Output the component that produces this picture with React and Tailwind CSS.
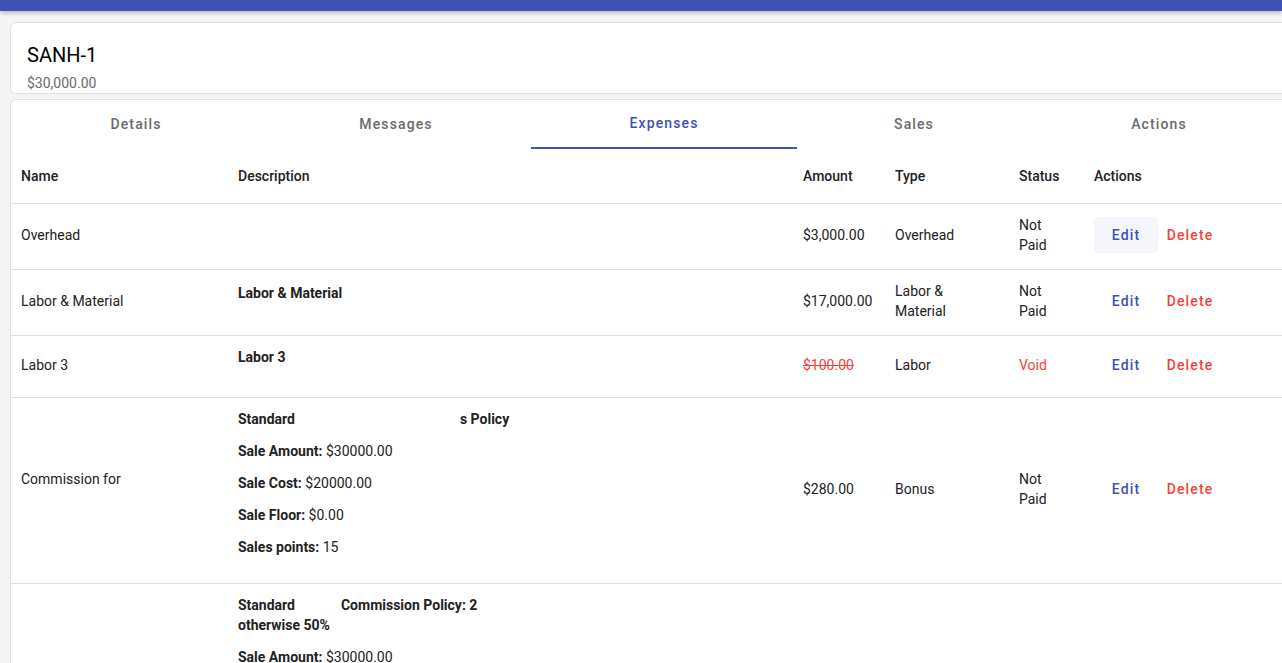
import React from 'react';

const tabs = [
    { label: 'Details', w: 'w-[250px]' },
    { label: 'Messages', w: 'w-[270px]' },
    { label: 'Expenses', w: 'w-[266px]', active: true },
    { label: 'Sales', w: 'w-[234px]' },
    { label: 'Actions', w: 'w-[256px]' },
];

function Line({ label, value }) {
    return (
        <p className="mb-3 leading-5">
            <span className="font-bold">{label}</span> {value}
        </p>
    );
}

function Actions({ hover }) {
    return (
        <div className="flex items-center">
            <button
                className={`h-9 min-w-[64px] px-2 rounded text-[14px] font-medium tracking-[0.08em] text-[#3f51b5] ${
                    hover ? 'bg-[#f5f6fb]' : ''
                }`}
            >
                Edit
            </button>
            <button className="h-9 min-w-[64px] px-2 rounded text-[14px] font-medium tracking-[0.08em] text-[#f44336]">
                Delete
            </button>
        </div>
    );
}

const td = 'pl-[10px] pr-2 pt-[11px] pb-[14px] align-middle border-b border-[#e0e0e0]';

export default function App() {
    return (
        <div className="h-screen w-full overflow-hidden bg-[#f5f5f5] font-['Roboto','Liberation_Sans',sans-serif] text-[14px] text-[#222]">
            <div className="h-[11px] bg-[#3f51b5] shadow-[0_2px_4px_rgba(0,0,0,0.25)]" />

            <div className="pl-[10px] pt-[11px]">
                <div className="w-[1290px] bg-white border border-[#e0e0e0] rounded-md px-4 pt-[16px]">
                    <h1 className="text-[20px] leading-8 text-black">SANH-1</h1>
                    <p className="mt-[2px] text-[14px] leading-5 text-[#6b6b6b]">$30,000.00</p>
                </div>

                <div className="w-[1290px] mt-[5px] bg-white border border-[#e0e0e0] rounded-md">
                    <div className="flex h-[49px]">
                        {tabs.map((t) => (
                            <div
                                key={t.label}
                                className={`${t.w} shrink-0 flex items-center justify-center text-[14px] font-medium tracking-[0.08em] ${
                                    t.active
                                        ? 'text-[#3f51b5] border-b-2 border-[#3f51b5]'
                                        : 'text-[#6b6b6b]'
                                }`}
                            >
                                {t.label}
                            </div>
                        ))}
                    </div>

                    <table className="w-full table-fixed border-collapse text-left">
                        <colgroup>
                            <col className="w-[217px]" />
                            <col className="w-[565px]" />
                            <col className="w-[92px]" />
                            <col className="w-[124px]" />
                            <col className="w-[75px]" />
                            <col />
                        </colgroup>
                        <thead>
                            <tr className="h-[54px]">
                                {['Name', 'Description', 'Amount', 'Type', 'Status', 'Actions'].map((h) => (
                                    <th
                                        key={h}
                                        className="pl-[10px] pr-2 pt-[1px] align-middle font-medium border-b border-[#e0e0e0]"
                                    >
                                        {h}
                                    </th>
                                ))}
                            </tr>
                        </thead>
                        <tbody className="leading-5">
                            <tr>
                                <td className={td}>Overhead</td>
                                <td className={td}></td>
                                <td className={td}>$3,000.00</td>
                                <td className={td}>Overhead</td>
                                <td className={td}>
                                    Not
                                    <br />
                                    Paid
                                </td>
                                <td className={td}>
                                    <Actions hover />
                                </td>
                            </tr>
                            <tr>
                                <td className={td}>Labor &amp; Material</td>
                                <td className={td}>
                                    <p className="font-bold mb-4">Labor &amp; Material</p>
                                </td>
                                <td className={td}>$17,000.00</td>
                                <td className={td}>
                                    Labor &amp;
                                    <br />
                                    Material
                                </td>
                                <td className={td}>
                                    Not
                                    <br />
                                    Paid
                                </td>
                                <td className={td}>
                                    <Actions />
                                </td>
                            </tr>
                            <tr>
                                <td className={td}>Labor 3</td>
                                <td className={td}>
                                    <p className="font-bold mb-4">Labor 3</p>
                                </td>
                                <td className={td}>
                                    <span className="line-through text-[#f44336]">$100.00</span>
                                </td>
                                <td className={td}>Labor</td>
                                <td className={`${td} text-[#f44336]`}>Void</td>
                                <td className={td}>
                                    <Actions />
                                </td>
                            </tr>
                            <tr>
                                <td className={td}>
                                    Commission for
                                    <br />
                                    &nbsp;
                                </td>
                                <td className={td}>
                                    <p className="mb-3 font-bold">
                                        Standard<span className="inline-block w-[165px]" />s Policy
                                    </p>
                                    <Line label="Sale Amount:" value="$30000.00" />
                                    <Line label="Sale Cost:" value="$20000.00" />
                                    <Line label="Sale Floor:" value="$0.00" />
                                    <Line label="Sales points:" value="15" />
                                </td>
                                <td className={td}>$280.00</td>
                                <td className={td}>Bonus</td>
                                <td className={td}>
                                    Not
                                    <br />
                                    Paid
                                </td>
                                <td className={td}>
                                    <Actions />
                                </td>
                            </tr>
                            <tr>
                                <td className={td}>
                                    Commission for
                                    <br />
                                    &nbsp;
                                </td>
                                <td className={td}>
                                    <p className="mb-3 font-bold">
                                        Standard<span className="inline-block w-[46px]" />Commission Policy: 2
                                        <br />
                                        otherwise 50%
                                    </p>
                                    <Line label="Sale Amount:" value="$30000.00" />
                                    <Line label="Sale Cost:" value="$20000.00" />
                                    <Line label="Sale Floor:" value="$0.00" />
                                    <Line label="Sales points:" value="15" />
                                </td>
                                <td className={td}>$280.00</td>
                                <td className={td}>Bonus</td>
                                <td className={td}>
                                    Not
                                    <br />
                                    Paid
                                </td>
                                <td className={td}>
                                    <Actions />
                                </td>
                            </tr>
                        </tbody>
                    </table>
                </div>
            </div>
        </div>
    );
}
